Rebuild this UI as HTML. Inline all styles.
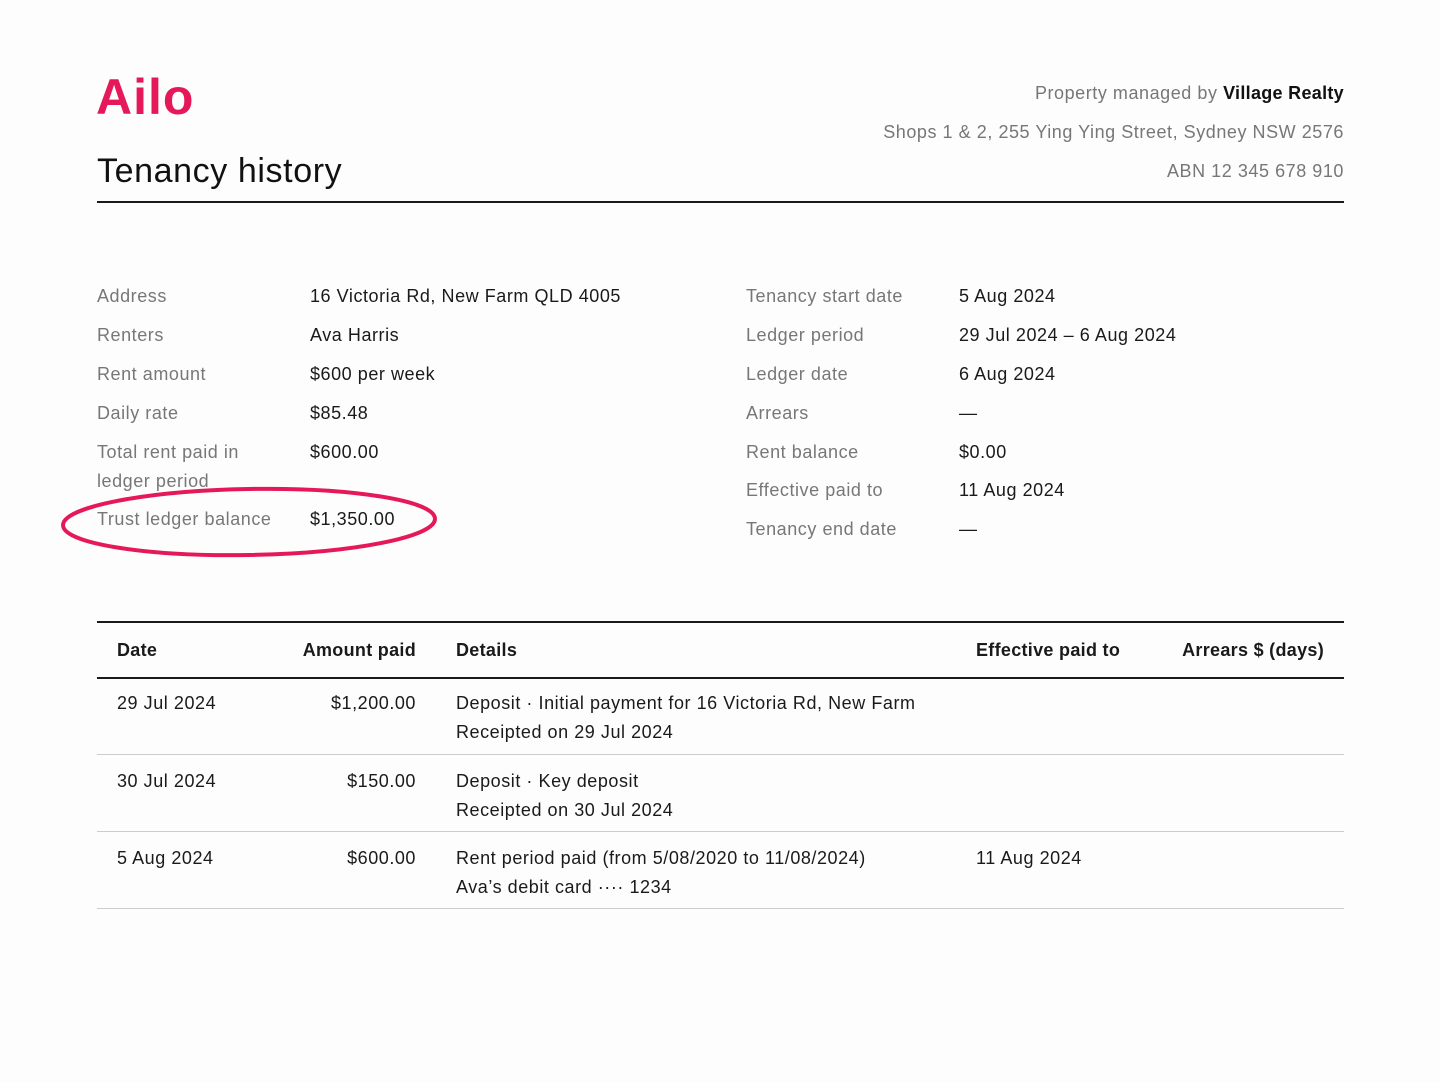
<!DOCTYPE html>
<html><head><meta charset="utf-8"><style>
body{margin:0;width:1440px;height:1083px;background:#fdfdfd;font-family:"Liberation Sans",sans-serif;color:#1a1a1a;position:relative;overflow:hidden}
.a{position:absolute;white-space:nowrap;font-size:18px;line-height:22px;letter-spacing:0.55px}
.g{color:#777}
.b{font-weight:bold;letter-spacing:0.3px}
.r{text-align:right}
.line{position:absolute;left:97px;width:1247px;background:#1a1a1a}
</style></head><body>
<div class="a b" style="left:96px;top:68px;font-size:50px;line-height:58px;color:#e5195a;letter-spacing:1px">Ailo</div>
<div class="a" style="left:97px;top:151px;font-size:34px;line-height:40px;color:#111;letter-spacing:0.6px">Tenancy history</div>
<div class="a g r" style="right:96px;top:82px;width:600px">Property managed by <span class="b" style="color:#111">Village Realty</span></div>
<div class="a g r" style="right:96px;top:121px;width:600px">Shops 1 &amp; 2, 255 Ying Ying Street, Sydney NSW 2576</div>
<div class="a g r" style="right:96px;top:160px;width:600px">ABN 12 345 678 910</div>
<div class="line" style="top:201px;height:2px"></div>

<div class="a g" style="left:97px;top:285px">Address</div><div class="a" style="left:310px;top:285px">16 Victoria Rd, New Farm QLD 4005</div>
<div class="a g" style="left:97px;top:324px">Renters</div><div class="a" style="left:310px;top:324px">Ava Harris</div>
<div class="a g" style="left:97px;top:363px">Rent amount</div><div class="a" style="left:310px;top:363px">$600 per week</div>
<div class="a g" style="left:97px;top:402px">Daily rate</div><div class="a" style="left:310px;top:402px">$85.48</div>
<div class="a g" style="left:97px;top:438px;line-height:29px">Total rent paid in<br>ledger period</div><div class="a" style="left:310px;top:441px">$600.00</div>
<div class="a g" style="left:97px;top:508px">Trust ledger balance</div><div class="a" style="left:310px;top:508px">$1,350.00</div>

<div class="a g" style="left:746px;top:285px">Tenancy start date</div><div class="a" style="left:959px;top:285px">5 Aug 2024</div>
<div class="a g" style="left:746px;top:324px">Ledger period</div><div class="a" style="left:959px;top:324px">29 Jul 2024 – 6 Aug 2024</div>
<div class="a g" style="left:746px;top:363px">Ledger date</div><div class="a" style="left:959px;top:363px">6 Aug 2024</div>
<div class="a g" style="left:746px;top:402px">Arrears</div><div class="a" style="left:959px;top:402px">—</div>
<div class="a g" style="left:746px;top:441px">Rent balance</div><div class="a" style="left:959px;top:441px">$0.00</div>
<div class="a g" style="left:746px;top:479px">Effective paid to</div><div class="a" style="left:959px;top:479px">11 Aug 2024</div>
<div class="a g" style="left:746px;top:518px">Tenancy end date</div><div class="a" style="left:959px;top:518px">—</div>

<svg style="position:absolute;left:0;top:0" width="1440" height="1083"><ellipse cx="249" cy="522" rx="186" ry="33" fill="none" stroke="#e5195a" stroke-width="4" transform="rotate(-1 249 522)"/></svg>

<div class="line" style="top:621px;height:2px"></div>
<div class="a b" style="left:117px;top:639px">Date</div>
<div class="a b r" style="left:216px;width:200px;top:639px">Amount paid</div>
<div class="a b" style="left:456px;top:639px">Details</div>
<div class="a b" style="left:976px;top:639px">Effective paid to</div>
<div class="a b r" style="left:1124px;width:200px;top:639px">Arrears $ (days)</div>
<div class="line" style="top:677px;height:2px"></div>

<div class="a" style="left:117px;top:692px">29 Jul 2024</div>
<div class="a r" style="left:216px;width:200px;top:692px">$1,200.00</div>
<div class="a" style="left:456px;top:689px;line-height:29px">Deposit · Initial payment for 16 Victoria Rd, New Farm<br>Receipted on 29 Jul 2024</div>
<div class="line" style="top:754px;height:1px;background:#ccc"></div>

<div class="a" style="left:117px;top:770px">30 Jul 2024</div>
<div class="a r" style="left:216px;width:200px;top:770px">$150.00</div>
<div class="a" style="left:456px;top:767px;line-height:29px">Deposit · Key deposit<br>Receipted on 30 Jul 2024</div>
<div class="line" style="top:831px;height:1px;background:#ccc"></div>

<div class="a" style="left:117px;top:847px">5 Aug 2024</div>
<div class="a r" style="left:216px;width:200px;top:847px">$600.00</div>
<div class="a" style="left:456px;top:844px;line-height:29px">Rent period paid (from 5/08/2020 to 11/08/2024)<br>Ava’s debit card ···· 1234</div>
<div class="a" style="left:976px;top:847px">11 Aug 2024</div>
<div class="line" style="top:908px;height:1px;background:#ccc"></div>
</body></html>
